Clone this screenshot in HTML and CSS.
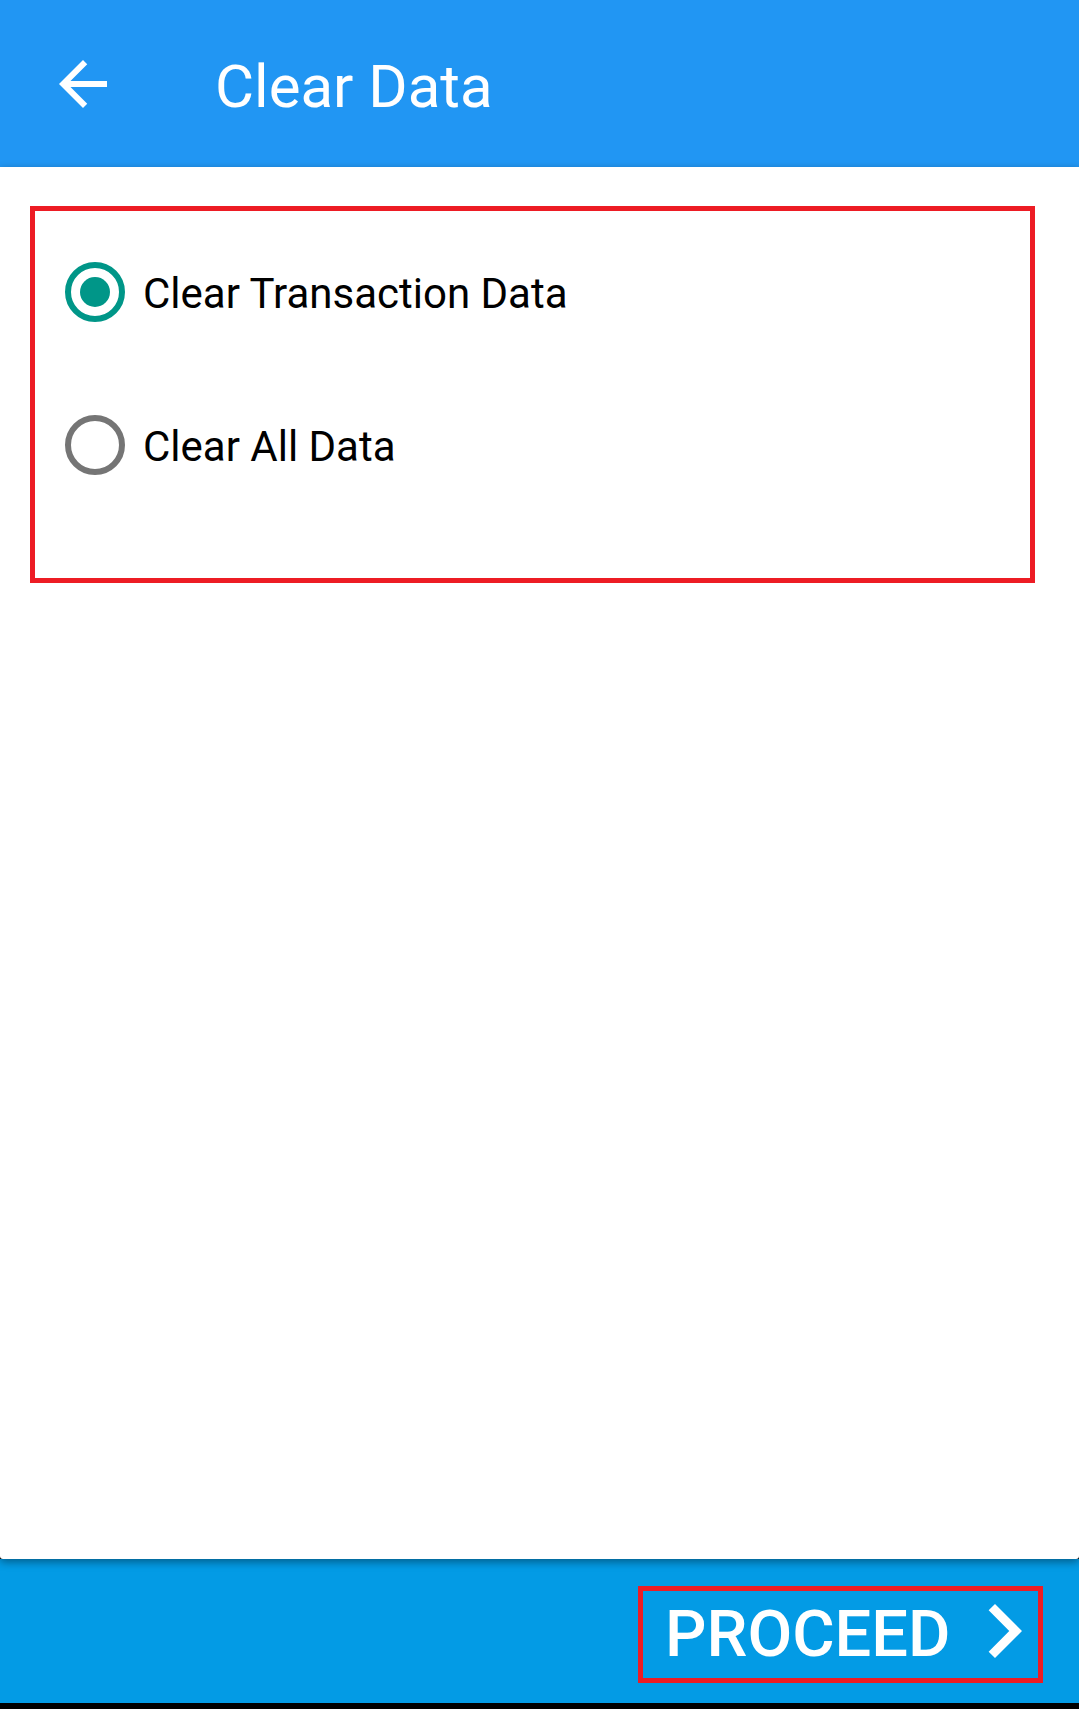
FILE: index.html
```html
<!DOCTYPE html>
<html lang="en">
<head>
    <meta charset="UTF-8">
    <meta name="viewport" content="width=device-width, initial-scale=1.0">
    <title>Clear Data</title>
    <link rel="stylesheet" href="styles.css">
</head>
<body>
    <div class="screen">
        <!-- Toolbar -->
        <header class="toolbar">
            <button class="back-button" aria-label="Back">
                <svg viewBox="0 0 24 24" width="72" height="72">
                    <path fill="#fff" d="M20 11H7.83l5.59-5.59L12 4l-8 8 8 8 1.41-1.41L7.83 13H20v-2z"/>
                </svg>
            </button>
            <h1 class="toolbar-title">Clear Data</h1>
        </header>

        <!-- Options -->
        <main class="content">
            <div class="option-group">
                <label class="option">
                    <span class="radio checked"></span>
                    <span class="option-label">Clear Transaction Data</span>
                </label>
                <label class="option">
                    <span class="radio"></span>
                    <span class="option-label">Clear All Data</span>
                </label>
            </div>
        </main>

        <!-- Bottom action bar -->
        <footer class="action-bar">
            <button class="proceed-button">
                <span>PROCEED</span>
                <svg viewBox="8 6 8 12" width="36" height="54">
                    <path fill="#fff" d="M10 6L8.59 7.41 13.17 12l-4.58 4.59L10 18l6-6z"/>
                </svg>
            </button>
        </footer>
    </div>
</body>
</html>
```

FILE: styles.css
```css
body {
    margin: 0;
    padding: 0;
    background-color: #000;
    font-family: Roboto, "Noto Sans", sans-serif;
    overflow: hidden;
}
.screen {
    display: flex;
    flex-direction: column;
    height: 1703px;
}
.toolbar {
    display: flex;
    align-items: center;
    height: 167px;
    flex-shrink: 0;
    background-color: #2196f3;
    padding-left: 47px;
    box-sizing: border-box;
}
.back-button {
    background: none;
    border: none;
    padding: 0;
    width: 72px;
    height: 72px;
    display: flex;
}
.toolbar-title {
    margin: 6px 0 0 96px;
    color: #fff;
    font-size: 60px;
    font-weight: 400;
    line-height: 1;
}
.content {
    flex: 1;
    background-color: #fff;
    padding: 39px 0 0 30px;
    position: relative;
    z-index: 1;
    box-shadow: 0 3px 8px rgba(0, 0, 0, 0.4);
    border-radius: 0 0 3px 3px;
}
.option-group {
    width: 1005px;
    height: 377px;
    box-sizing: border-box;
    border: 5px solid #ed1c24;
    padding: 4px 0 0 30px;
}
.option {
    display: flex;
    align-items: center;
    height: 153px;
}
.radio {
    width: 60px;
    height: 60px;
    box-sizing: border-box;
    border: 6px solid #757575;
    border-radius: 50%;
    display: flex;
    align-items: center;
    justify-content: center;
    flex-shrink: 0;
}
.radio.checked {
    border-color: #009688;
}
.radio.checked::after {
    content: "";
    width: 30px;
    height: 30px;
    border-radius: 50%;
    background-color: #009688;
}
.option-label {
    margin-left: 18px;
    font-size: 42px;
    color: #000;
    padding-top: 3px;
}
.action-bar {
    height: 144px;
    flex-shrink: 0;
    background-color: #039be5;
    display: flex;
    justify-content: flex-end;
    align-items: flex-start;
    padding: 27px 36px 0 0;
    box-sizing: border-box;
}
.proceed-button {
    display: flex;
    align-items: center;
    width: 405px;
    height: 97px;
    box-sizing: border-box;
    border: 5px solid #ed1c24;
    background: none;
    padding: 0 0 0 22px;
    color: #fff;
    font-family: Roboto, "Noto Sans", sans-serif;
    font-size: 65px;
    font-weight: 500;
    line-height: 1;
}
.proceed-button svg {
    margin: 0 0 8px 35px;
}
```
